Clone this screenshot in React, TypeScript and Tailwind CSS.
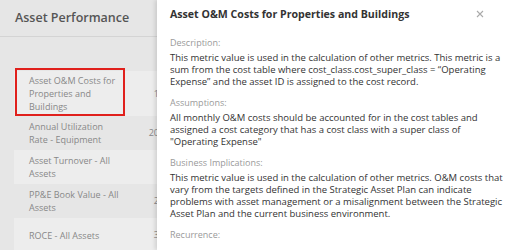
const rows = [
  { name: 'Asset O&M Costs for Properties and Buildings', value: '1', light: true, selected: true },
  { name: 'Annual Utilization Rate - Equipment', value: '20', light: false },
  { name: 'Asset Turnover - All Assets', value: '', light: true },
  { name: 'PP&E Book Value - All Assets', value: '2', light: false },
  { name: 'ROCE - All Assets', value: '3', light: true },
]

const Section = ({ label, children }: { label: string; children: string }) => (
  <div className="mb-[9px]">
    <div className="text-[9px] leading-[12px] text-[#9a9a9a]">{label}</div>
    <p className="mt-[3px] text-[9.5px] leading-[12px] text-[#333]">{children}</p>
  </div>
)

export default function App() {
  return (
    <div className="relative h-[250px] w-[521px] overflow-hidden bg-[#e6e6e6] font-['Open_Sans',sans-serif]">
      <header className="flex h-[37px] items-center border-b border-[#d4d4d4] px-[15px]">
        <h1 className="text-[12.5px] font-semibold text-[#555]">Asset Performance</h1>
      </header>

      <ul className="ml-[14px] pt-[34px]">
        {rows.map((r) => (
          <li
            key={r.name}
            className={`relative flex min-h-[34px] items-center py-[3px] ${r.light ? 'bg-[#ededed]' : ''}`}
          >
            <span className="w-[115px] pl-[15px] pr-[6px] text-[9px] leading-[13px] text-[#888]">{r.name}</span>
            <span className="w-[30px] text-right text-[9px] text-[#888]">{r.value}</span>
            {r.selected && (
              <div className="absolute -top-[3px] bottom-0 left-[1px] w-[110px] border-2 border-[#e0201c]" />
            )}
          </li>
        ))}
      </ul>

      <aside className="absolute bottom-0 left-[157px] right-0 top-0 bg-white px-[13px] shadow-[-2px_0_4px_rgba(0,0,0,0.12)]">
        <div className="flex items-start justify-between pt-[7px]">
          <h2 className="text-[10.6px] font-bold leading-[14px] text-[#333]">
            Asset O&amp;M Costs for Properties and Buildings
          </h2>
          <svg width="8" height="8" viewBox="0 0 8 8" className="mr-[24px] mt-[3px]">
            <path d="M1 1 L7 7 M7 1 L1 7" stroke="#aaa" strokeWidth="1.1" />
          </svg>
        </div>
        <div className="pt-[16px]">
          <Section label="Description:">
            This metric value is used in the calculation of other metrics. This metric is a sum from the cost table where cost_class.cost_super_class = “Operating Expense” and the asset ID is assigned to the cost record.
          </Section>
          <Section label="Assumptions:">
            All monthly O&amp;M costs should be accounted for in the cost tables and assigned a cost category that has a cost class with a super class of "Operating Expense"
          </Section>
          <Section label="Business Implications:">
            This metric value is used in the calculation of other metrics. O&amp;M costs that vary from the targets defined in the Strategic Asset Plan can indicate problems with asset management or a misalignment between the Strategic Asset Plan and the current business environment.
          </Section>
          <Section label="Recurrence:">{''}</Section>
        </div>
      </aside>
    </div>
  )
}
